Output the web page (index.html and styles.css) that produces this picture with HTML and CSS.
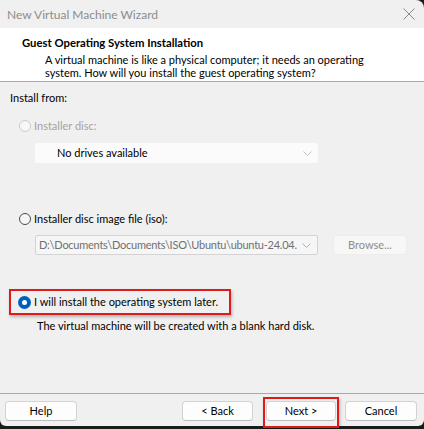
FILE: index.html
```html
<!DOCTYPE html>
<html>
<head>
<meta charset="utf-8">
<link rel="stylesheet" href="styles.css">
</head>
<body>
<div class="window">
  <div class="titlebar">
    <span class="title">New Virtual Machine Wizard</span>
    <svg class="close" width="12" height="12" viewBox="0 0 12 12"><path d="M0.5 0.5 L11.5 11.5 M11.5 0.5 L0.5 11.5" stroke="#8a8a8a" stroke-width="1" fill="none"/></svg>
  </div>
  <div class="header">
    <div class="h-title">Guest Operating System Installation</div>
    <div class="h-desc">A virtual machine is like a physical computer; it needs an operating<br>system. How will you install the guest operating system?</div>
  </div>
  <div class="content">
    <div class="install-from">Install from:</div>
    <div class="radio-row disabled row1">
      <span class="radio"></span><span>Installer disc:</span>
    </div>
    <div class="combo-row row-combo1">
      <div class="combo plain"><span class="combo-text drives">No drives available</span>
        <svg class="chev" width="9" height="5" viewBox="0 0 9 5"><path d="M0.5 0.5 L4.5 4.5 L8.5 0.5" stroke="#c4c4c4" fill="none"/></svg>
      </div>
    </div>
    <div class="radio-row row2">
      <span class="radio"></span><span>Installer disc image file (iso):</span>
    </div>
    <div class="combo-row row-combo2">
      <div class="combo bordered"><span class="combo-text path">D:\Documents\Documents\ISO\Ubuntu\ubuntu-24.04.</span>
        <svg class="chev" width="9" height="5" viewBox="0 0 9 5"><path d="M0.5 0.5 L4.5 4.5 L8.5 0.5" stroke="#b0b0b0" fill="none"/></svg>
      </div>
      <div class="browse">Browse...</div>
    </div>
    <div class="later-wrap">
      <div class="radio-row later">
        <span class="radio checked"></span><span>I will install the operating system later.</span>
      </div>
    </div>
    <div class="later-note">The virtual machine will be created with a blank hard disk.</div>
  </div>
  <div class="footer">
    <div class="btn">Help</div>
    <div class="right-btns">
      <div class="btn back">&lt; Back</div>
      <div class="btn next">Next &gt;</div>
      <div class="btn cancel">Cancel</div>
    </div>
  </div>
</div>
</body>
</html>
```
FILE: styles.css
```css
html, body {
  margin: 0;
  padding: 0;
}
body {
  width: 424px;
  height: 429px;
  background: #1b1b1b;
  font-family: "Lato", "Noto Sans", sans-serif;
  font-size: 11px;
  color: #000;
  overflow: hidden;
}
.window {
  width: 424px;
  height: 426px;
  background: #f0f0f0;
  border-radius: 0 8px 6px 6px;
  display: flex;
  flex-direction: column;
}
.titlebar {
  height: 28px;
  flex: none;
  display: flex;
  align-items: center;
  justify-content: space-between;
  padding: 0 9px 0 7px;
  color: #8c8c8c;
  font-size: 12px;
}
.close {
  display: block;
}
.header {
  flex: none;
  background: #fff;
  border-bottom: 1px solid #a9a9a9;
  box-sizing: border-box;
  height: 54px;
  padding-top: 8px;
}
.h-title {
  font-weight: bold;
  font-size: 11.3px;
  padding-left: 22px;
  line-height: 14px;
  margin-bottom: 3px;
  white-space: nowrap;
}
.h-desc {
  padding-left: 45px;
  line-height: 13px;
  white-space: nowrap;
}
.content {
  flex: 1;
  padding: 0 10px;
}
.install-from {
  margin-top: 8px;
  line-height: 15px;
}
.radio-row {
  display: flex;
  align-items: center;
  height: 16px;
  line-height: 16px;
  padding-left: 9px;
  white-space: nowrap;
}
.radio-row.disabled {
  color: #a3a3a3;
}
.row1 {
  margin-top: 13px;
}
.row2 {
  margin-top: 48px;
}
.radio {
  width: 12px;
  height: 12px;
  box-sizing: border-box;
  border: 1px solid #4c4c4c;
  border-radius: 50%;
  background: #f7f7f7;
  margin-right: 3px;
  flex: none;
}
.disabled .radio {
  border-color: #cbcbcb;
}
.radio.checked {
  width: 13px;
  height: 13px;
  background: #005fb8;
  border: none;
  position: relative;
  margin-left: -1px;
  margin-right: 3px;
}
.radio.checked::after {
  content: "";
  position: absolute;
  left: 4px;
  top: 4px;
  width: 5px;
  height: 5px;
  border-radius: 50%;
  background: #fff;
}
.combo-row {
  display: flex;
  margin-left: 25px;
  height: 20px;
}
.row-combo1 {
  margin-top: 9px;
}
.row-combo2 {
  margin-top: 8px;
}
.combo {
  width: 283px;
  height: 20px;
  box-sizing: border-box;
  display: flex;
  align-items: center;
  justify-content: space-between;
  border-radius: 2px;
  padding-right: 6px;
}
.combo.plain {
  background: #fbfbfb;
}
.combo.bordered {
  background: #f6f6f6;
  border: 1px solid #d3d3d3;
}
.combo-text {
  line-height: 18px;
  white-space: nowrap;
  overflow: hidden;
  flex: 1;
  min-width: 0;
}
.drives {
  padding-left: 22px;
}
.path {
  padding-left: 3px;
  color: #707070;
  letter-spacing: -0.25px;
}
.chev {
  display: block;
  flex: none;
  margin-left: 4px;
}
.browse {
  margin-left: 15px;
  width: 74px;
  height: 20px;
  box-sizing: border-box;
  background: #f7f7f7;
  border: 1px solid #ececec;
  border-radius: 3px;
  color: #8c8c8c;
  text-align: center;
  line-height: 18px;
}
.later-wrap {
  margin-top: 34px;
  margin-left: -1px;
  display: flex;
}
.later {
  height: 26px;
  width: 222px;
  box-sizing: border-box;
  border: 2px solid #de1b1b;
  padding-left: 8px;
  box-shadow: 1px 2px 3px rgba(0,0,0,0.25);
}
.later-note {
  margin-top: 3px;
  padding-left: 27px;
  line-height: 15px;
}
.footer {
  flex: none;
  height: 33px;
  box-sizing: border-box;
  border-top: 1px solid #a9a9a9;
  padding: 7px 7px 0 5px;
  display: flex;
  justify-content: space-between;
  align-items: flex-start;
}
.right-btns {
  display: flex;
}
.btn {
  width: 72px;
  height: 20px;
  box-sizing: border-box;
  background: #fdfdfd;
  border: 1px solid #d2d2d2;
  border-bottom-color: #bcbcbc;
  border-radius: 4px;
  text-align: center;
  line-height: 18px;
}
.back {
  width: 71px;
}
.next {
  width: 70px;
  margin-left: 13px;
  position: relative;
}
.next::after {
  content: "";
  position: absolute;
  left: -4px;
  right: -4px;
  top: -5px;
  bottom: -8px;
  border: 2px solid #de1b1b;
  box-shadow: 1px 2px 3px rgba(0,0,0,0.25);
}
.cancel {
  margin-left: 9px;
}
```
